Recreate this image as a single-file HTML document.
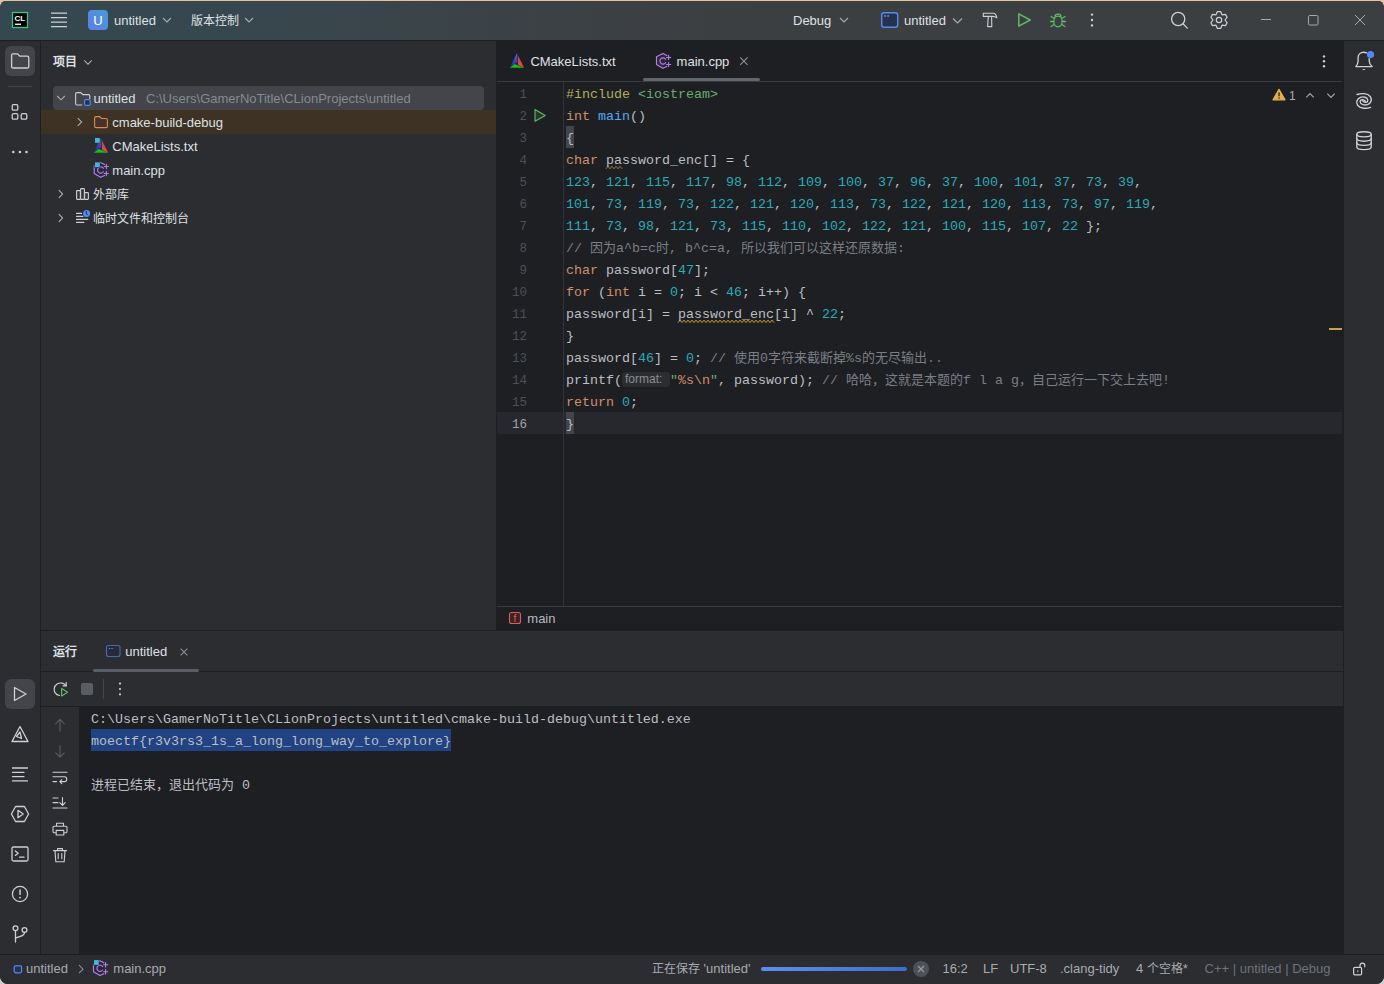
<!DOCTYPE html>
<html lang="zh-CN"><head><meta charset="utf-8">
<style>
*{margin:0;padding:0;box-sizing:border-box}
html,body{width:1384px;height:984px;overflow:hidden}
body{background:linear-gradient(180deg,#e6c29f 0%,#e6c29f 50%,#cfcfcf 50%,#cfcfcf 100%);font-family:"Liberation Sans",sans-serif;font-size:13px;color:#dfe1e5;position:relative}
.a{position:absolute}
.win{position:absolute;left:0;top:0;width:1384px;height:984px;background:#2b2d30;border-radius:8px;overflow:hidden}
.t{position:absolute;white-space:pre;line-height:16px;font-size:13px}
.cj{font-size:12px}
svg{position:absolute;overflow:visible;left:0;top:0}
.code{position:absolute;margin-top:2px;left:566px;white-space:pre;font-family:"Liberation Mono",monospace;font-size:13.33px;line-height:22px;height:22px;color:#bcbec4}
.c13{font-size:13px}
.k{color:#cf8e6d}.n{color:#2aacb8}.f{color:#56a8f5}.s{color:#6aab73}.cm{color:#7a7e85}.pp{color:#b3ae60}
.ln{position:absolute;margin-top:2px;width:40px;text-align:right;left:487px;font-family:"Liberation Mono",monospace;font-size:12.5px;line-height:22px;color:#4b5059}
</style></head><body>
<svg width="0" height="0" style="position:absolute">
<defs>
  <linearGradient id="cmb" x1="0" y1="0" x2="0" y2="1"><stop offset="0" stop-color="#6068d8"/><stop offset="1" stop-color="#1c1aa6"/></linearGradient>
  <linearGradient id="cmr" x1="0" y1="0" x2="0" y2="1"><stop offset="0" stop-color="#c03a34"/><stop offset="1" stop-color="#e85050"/></linearGradient>
</defs></svg>
<div class="win">
<div class="a" style="left:0;top:0;width:1384px;height:40px;background:linear-gradient(90deg,#35474f 0px,#35474f 150px,#39464c 330px,#3c4145 560px,#3c3f42 760px,#3c3f42 1384px)"></div>
<div class="a" style="left:0;top:40px;width:1384px;height:1px;background:#1e1f22"></div>
<svg width="1384" height="41">
  <!-- CL logo -->
  <rect x="12.5" y="12.5" width="15" height="15" fill="#000" stroke="#21d789" stroke-width="1.2"/>
  <text x="14.6" y="21.2" font-family="Liberation Sans" font-weight="bold" font-size="8" fill="#fff">CL</text>
  <rect x="15" y="23.6" width="6" height="1.3" fill="#fff"/>
  <!-- hamburger -->
  <g stroke="#ced0d6" stroke-width="1.3">
    <line x1="51" y1="13.2" x2="67" y2="13.2"/><line x1="51" y1="17.7" x2="67" y2="17.7"/>
    <line x1="51" y1="22.2" x2="67" y2="22.2"/><line x1="51" y1="26.7" x2="67" y2="26.7"/>
  </g>
  <!-- U badge -->
  <defs><linearGradient id="ug" x1="0" y1="1" x2="1" y2="0"><stop offset="0" stop-color="#5b7ee8"/><stop offset="1" stop-color="#4a9ad4"/></linearGradient></defs>
  <rect x="88" y="10" width="20" height="20" rx="4" fill="url(#ug)"/>
  <text x="98" y="24.6" text-anchor="middle" font-family="Liberation Sans" font-size="13" fill="#fff">U</text>
  <g fill="none" stroke="#a9abb0" stroke-width="1.1">
    <path d="M163 18 L167 22 L171 18"/>
    <path d="M245 18 L249 22 L253 18"/>
    <path d="M840 18 L844 22 L848 18"/>
    <path d="M953 18.5 L957.5 23 L962 18.5"/>
  </g>
  <!-- run config icon -->
  <rect x="881.7" y="12.7" width="16" height="14.6" rx="2.5" fill="#25324d" stroke="#548af7" stroke-width="1.4"/>
  <rect x="884.3" y="15.3" width="1.6" height="1.3" fill="#8fb0f0"/><rect x="887.3" y="15.3" width="1.6" height="1.3" fill="#8fb0f0"/>
  <!-- hammer -->
  <g fill="none" stroke="#ced0d6" stroke-width="1.1" stroke-linejoin="round">
    <path d="M983.3 13.2 H993.5 C995 13.5 996.5 15.5 996.8 17.8 C995.5 16.8 993.5 16.3 991.8 16.4 H983.3 Z"/><path d="M988.3 16.6 L987.6 26.6 H991.8 L991.6 16.6"/>
  </g>
  <!-- run -->
  <path d="M1018.8 13.8 L1030.2 20 L1018.8 26.2 Z" fill="none" stroke="#5fb865" stroke-width="1.5" stroke-linejoin="round"/>
  <!-- bug -->
  <g fill="none" stroke="#5fb865" stroke-width="1.3" stroke-linecap="round">
    <ellipse cx="1058" cy="21.5" rx="4.2" ry="5.3"/>
    <path d="M1055 16.5 C1055 13.2 1061 13.2 1061 16.5"/>
    <path d="M1051 16.5 L1053.8 18.3 M1065 16.5 L1062.2 18.3 M1050.5 21.5 H1053.8 M1065.5 21.5 H1062.2 M1051 26.5 L1053.8 24.7 M1065 26.5 L1062.2 24.7"/>
  </g>
  <!-- kebab -->
  <g fill="#ced0d6"><circle cx="1092" cy="14.6" r="1.2"/><circle cx="1092" cy="20" r="1.2"/><circle cx="1092" cy="25.4" r="1.2"/></g>
  <!-- search -->
  <g fill="none" stroke="#ced0d6" stroke-width="1.3" stroke-linecap="round">
    <circle cx="1178.2" cy="19" r="6.6"/><path d="M1183 23.8 L1187.3 28.1"/>
  </g>
  <!-- gear -->
  <g fill="none" stroke="#ced0d6" stroke-width="1.2" stroke-linejoin="round">
    <path d="M1217.36 11.56 L1220.64 11.56 L1222.00 14.80 L1225.49 14.36 L1227.13 17.20 L1225.00 20.00 L1227.13 22.80 L1225.49 25.64 L1222.00 25.20 L1220.64 28.44 L1217.36 28.44 L1216.00 25.20 L1212.51 25.64 L1210.87 22.80 L1213.00 20.00 L1210.87 17.20 L1212.51 14.36 L1216.00 14.80 Z"/>
    <circle cx="1219" cy="20" r="2.7"/>
  </g>
  <!-- window controls -->
  <g fill="none" stroke="#a7a9ad" stroke-width="1">
    <path d="M1261 19.5 H1271"/>
    <rect x="1308.5" y="15.5" width="9.5" height="9.5" rx="1.2"/>
    <path d="M1355 15 L1365 25 M1365 15 L1355 25"/>
  </g>
</svg>
<div class="t" style="left:114px;top:13px">untitled</div>
<div class="t cj" style="left:191px;top:13px">版本控制</div>
<div class="t" style="left:793px;top:13px">Debug</div>
<div class="t" style="left:904px;top:13px">untitled</div>
<div class="a" style="left:40px;top:41px;width:1px;height:913px;background:#1e1f22"></div>
<div class="a" style="left:5px;top:46px;width:30px;height:30px;border-radius:6px;background:#43454a"></div>
<div class="a" style="left:8px;top:86px;width:24px;height:1px;background:#43454a"></div>
<div class="a" style="left:5px;top:679px;width:30px;height:30px;border-radius:6px;background:#43454a"></div>
<svg width="41" height="984">
  <g fill="none" stroke="#ced0d6" stroke-width="1.3" stroke-linejoin="round" stroke-linecap="round">
    <!-- folder -->
    <path d="M11.6 55.5 a1.6 1.6 0 0 1 1.6 -1.6 h4.4 l2.2 2.3 h7.4 a1.6 1.6 0 0 1 1.6 1.6 v8.6 a1.6 1.6 0 0 1 -1.6 1.6 h-14 a1.6 1.6 0 0 1 -1.6 -1.6 z"/>
    <!-- structure -->
    <rect x="12.2" y="104.6" width="5.6" height="5.6" rx="1.3"/>
    <rect x="12.2" y="113.6" width="5.6" height="5.6" rx="1.3"/>
    <rect x="21.2" y="113.6" width="5.6" height="5.6" rx="1.3"/>
    <!-- run -->
    <path d="M14.5 687.5 L26 694 L14.5 700.5 Z"/>
    <!-- cmake -->
    <path d="M20 726.5 L28 741.5 H12 Z"/>
    <path d="M20 732 L21.5 738.5 L16.5 736.5 Z"/>
    <!-- lines -->
    <path d="M12.5 768 H27.5 M12.5 772.3 H24 M12.5 776.6 H24 M12.5 780.9 H27.5"/>
    <!-- services -->
    <path d="M15.6 806.5 H24.4 L28.6 814 L24.4 821.5 H15.6 L11.4 814 Z"/>
    <path d="M18 810.3 L23.2 814 L18 817.7 Z"/>
    <!-- terminal -->
    <rect x="12" y="847" width="16" height="14" rx="1.5"/>
    <path d="M15.3 851 L18.2 853.2 L15.3 855.4 M19.6 857.2 H24"/>
    <!-- problems -->
    <circle cx="20" cy="894" r="7.6"/>
  </g>
  <g fill="#ced0d6"><rect x="19.3" y="889.3" width="1.5" height="5.8" rx=".7"/><circle cx="20" cy="897.6" r=".95"/>
  <circle cx="13.3" cy="152" r="1.3"/><circle cx="19.9" cy="152" r="1.3"/><circle cx="26.5" cy="152" r="1.3"/></g>
  <!-- git -->
  <g fill="none" stroke="#ced0d6" stroke-width="1.3" stroke-linecap="round">
    <circle cx="15.5" cy="928.2" r="2.4"/><circle cx="24.5" cy="930" r="2.4"/>
    <path d="M15.5 930.6 V942 M24.5 932.4 C24.5 936.5 19 936 15.8 938"/>
  </g>
</svg>
<div class="a" style="left:496px;top:41px;width:1px;height:590px;background:#1e1f22"></div>
<div class="t cj" style="left:53px;top:54px;font-weight:bold">项目</div>
<div class="a" style="left:53px;top:86px;width:431px;height:24px;border-radius:4px;background:#43454a"></div>
<div class="a" style="left:41px;top:110px;width:455px;height:24px;background:#3d3223"></div>
<svg width="497" height="240">
  <g fill="none" stroke="#a9abb0" stroke-width="1.1">
    <path d="M84.2 60.3 L88 64.1 L91.8 60.3"/>
    <path d="M57.2 96 L61 99.8 L64.8 96"/>
    <path d="M77.8 118.2 L81.6 122 L77.8 125.8"/>
    <path d="M58.8 190.2 L62.6 194 L58.8 197.8"/>
    <path d="M58.8 214.2 L62.6 218 L58.8 221.8"/>
  </g>
  <!-- untitled folder w/ module badge -->
  <path d="M75.6 94 a1.4 1.4 0 0 1 1.4 -1.4 h3.8 l2 2 h5.6 a1.4 1.4 0 0 1 1.4 1.4 v3" fill="none" stroke="#ced0d6" stroke-width="1.1"/>
  <path d="M75.6 94 v9.6 a1.4 1.4 0 0 0 1.4 1.4 h5.2" fill="none" stroke="#ced0d6" stroke-width="1.1"/>
  <rect x="84.6" y="99.6" width="5.6" height="5.8" rx="1.2" fill="#25324d" stroke="#548af7" stroke-width="1.1"/>
  <!-- orange folder -->
  <path d="M94.6 118 a1.4 1.4 0 0 1 1.4 -1.4 h3.6 l1.9 1.9 h4.5 a1.4 1.4 0 0 1 1.4 1.4 v6.3 a1.4 1.4 0 0 1 -1.4 1.4 h-10 a1.4 1.4 0 0 1 -1.4 -1.4 z" fill="#45322b" stroke="#e08855" stroke-width="1.1"/>
  <!-- cmake icon -->
  <g transform="translate(93.8 138.9) scale(1.0214 0.9929)">
    <polygon points="6.6,0 0,14 4.7,10.2 7.5,8.7 7.2,0.3" fill="url(#cmb)"/>
    <polygon points="7.3,0 14,14 8,11 8,0.5" fill="url(#cmr)"/>
    <polygon points="0,14 4.7,10.2 14,14" fill="#12c412"/>
  </g>
  <rect x="94.4" y="137.4" width="6" height="6" fill="#2b2d30"/>
  <rect x="95" y="138" width="4.8" height="4.8" fill="#40b6e0"/>
  <!-- cpp icon -->
  <g transform="translate(92.7 162.0) scale(1.0000 1.0000)">
    <path d="M7.9 0.4 L1.5 3.7 V11.5 L7.9 15.3 L11.8 13.2 V2.6 Z" fill="#2e2638"/>
    <g fill="none" stroke="#b080ee" stroke-width="1.15" stroke-linecap="round" stroke-linejoin="round">
      <path d="M11.8 2.5 L7.9 0.4 L1.5 3.7 V11.5 L7.9 15.3 L11.8 13.4"/>
      <path d="M10.6 6.3 A3.1 3.1 0 1 0 10.6 9.7"/>
      <path d="M13.6 2.4 V6.6 M11.5 4.5 H15.7 M13.6 9.4 V13.6 M11.5 11.5 H15.7"/>
    </g>
  </g>
  <rect x="94.4" y="161.8" width="6" height="6" fill="#2b2d30"/>
  <rect x="95" y="162.4" width="4.8" height="4.8" fill="#40b6e0"/>
  <!-- library -->
  <g fill="#36373b" stroke="#ced0d6" stroke-width="1.1" stroke-linejoin="round">
    <rect x="76.6" y="190.6" width="3.8" height="8.8" rx=".6"/>
    <rect x="80.6" y="188.6" width="3.8" height="10.8" rx=".6"/>
    <rect x="84.6" y="192.6" width="3.8" height="6.8" rx=".6"/>
  </g>
  <!-- scratches -->
  <g fill="none" stroke="#ced0d6" stroke-width="1.1" stroke-linecap="round">
    <path d="M76.5 213.4 H81.6 M76.5 216.4 H83 M76.5 219.4 H87.8 M76.5 222.4 H83.8"/>
  </g>
  <circle cx="86.6" cy="213.4" r="4.2" fill="#2b2d30"/>
  <circle cx="86.6" cy="213.4" r="3.5" fill="#548af7"/>
  <path d="M86.3 211.2 V213.7 L87.8 215.2" fill="none" stroke="#1e1f22" stroke-width="1"/>
</svg>
<div class="t" style="left:93.5px;top:91px">untitled</div>
<div class="t" style="left:146px;top:91px;color:#868a91">C:\Users\GamerNoTitle\CLionProjects\untitled</div>
<div class="t" style="left:112.3px;top:115px">cmake-build-debug</div>
<div class="t" style="left:112.3px;top:139px">CMakeLists.txt</div>
<div class="t" style="left:112.3px;top:163px">main.cpp</div>
<div class="t cj" style="left:93px;top:187px">外部库</div>
<div class="t cj" style="left:93px;top:211px">临时文件和控制台</div>
<div class="a" style="left:497px;top:41px;width:846px;height:590px;background:#1e1f22"></div>
<div class="a" style="left:497px;top:81px;width:845px;height:1px;background:#393b40"></div>
<div class="a" style="left:643px;top:78px;width:117px;height:3px;border-radius:2px;background:#62666d"></div>
<div class="a" style="left:497px;top:412px;width:845px;height:22px;background:#26282e"></div>
<div class="a" style="left:563px;top:82px;width:1px;height:524px;background:#313438"></div>
<div class="a" style="left:497px;top:606px;width:845px;height:1px;background:#393b40"></div>
<div class="a" style="left:566px;top:126px;width:8px;height:22px;background:#43454a"></div>
<div class="a" style="left:566px;top:412px;width:8px;height:22px;background:#43454a"></div>
<div class="a" style="left:1329px;top:328px;width:13px;height:2px;background:#c9a04e"></div>
<svg width="1384" height="640">
  <!-- cmake tab icon -->
  <g transform="translate(509.9 53.8) scale(1.0071 0.9929)">
    <polygon points="6.6,0 0,14 4.7,10.2 7.5,8.7 7.2,0.3" fill="url(#cmb)"/>
    <polygon points="7.3,0 14,14 8,11 8,0.5" fill="url(#cmr)"/>
    <polygon points="0,14 4.7,10.2 14,14" fill="#12c412"/>
  </g>
  <!-- cpp tab icon -->
  <g transform="translate(655.0 53.0) scale(1.0000 1.0000)">
    <path d="M7.9 0.4 L1.5 3.7 V11.5 L7.9 15.3 L11.8 13.2 V2.6 Z" fill="#2e2638"/>
    <g fill="none" stroke="#b080ee" stroke-width="1.15" stroke-linecap="round" stroke-linejoin="round">
      <path d="M11.8 2.5 L7.9 0.4 L1.5 3.7 V11.5 L7.9 15.3 L11.8 13.4"/>
      <path d="M10.6 6.3 A3.1 3.1 0 1 0 10.6 9.7"/>
      <path d="M13.6 2.4 V6.6 M11.5 4.5 H15.7 M13.6 9.4 V13.6 M11.5 11.5 H15.7"/>
    </g>
  </g>
  <path d="M740.2 57.4 L747.6 64.8 M747.6 57.4 L740.2 64.8" stroke="#8c8f94" stroke-width="1.1"/>
  <g fill="#ced0d6"><circle cx="1324" cy="56.4" r="1.2"/><circle cx="1324" cy="61.3" r="1.2"/><circle cx="1324" cy="66.2" r="1.2"/></g>
  <!-- gutter run -->
  <path d="M535 109.6 L545.2 115.4 L535 121.2 Z" fill="#253a2a" stroke="#5fb865" stroke-width="1.15" stroke-linejoin="round"/>
  <!-- warning -->
  <path d="M1279 89.3 L1285 99.8 H1273 Z" fill="#e0b04e" stroke="#e0b04e" stroke-width="1.2" stroke-linejoin="round"/>
  <rect x="1278.4" y="92.3" width="1.3" height="4" fill="#1e1f22"/><rect x="1278.4" y="97.4" width="1.3" height="1.3" fill="#1e1f22"/>
  <g fill="none" stroke="#a9abb0" stroke-width="1.1">
    <path d="M1306.3 97.4 L1310 93.6 L1313.7 97.4"/>
    <path d="M1327.3 93.6 L1331 97.4 L1334.7 93.6"/>
  </g>
  <!-- wavy underlines -->
  <path d="M606 168.8 L608.0 166.3 L610.0 168.8 L612.0 166.3 L614.0 168.8 L616.0 166.3 L618.0 168.8 L620.0 166.3 L622.0 168.8" fill="none" stroke="#8f7e45" stroke-width="1"/>
  <path d="M678 322.6 L680.0 320.1 L682.0 322.6 L684.0 320.1 L686.0 322.6 L688.0 320.1 L690.0 322.6 L692.0 320.1 L694.0 322.6 L696.0 320.1 L698.0 322.6 L700.0 320.1 L702.0 322.6 L704.0 320.1 L706.0 322.6 L708.0 320.1 L710.0 322.6 L712.0 320.1 L714.0 322.6 L716.0 320.1 L718.0 322.6 L720.0 320.1 L722.0 322.6 L724.0 320.1 L726.0 322.6 L728.0 320.1 L730.0 322.6 L732.0 320.1 L734.0 322.6 L736.0 320.1 L738.0 322.6 L740.0 320.1 L742.0 322.6 L744.0 320.1 L746.0 322.6 L748.0 320.1 L750.0 322.6 L752.0 320.1 L754.0 322.6 L756.0 320.1 L758.0 322.6 L760.0 320.1 L762.0 322.6 L764.0 320.1 L766.0 322.6 L768.0 320.1 L770.0 322.6 L772.0 320.1 L774.0 322.6" fill="none" stroke="#c4a13e" stroke-width="1"/>
  <!-- breadcrumb f icon -->
  <rect x="509.5" y="612.5" width="11" height="11" rx="2" fill="#3b2326" stroke="#db5c5c" stroke-width="1.1"/>
  <text x="515" y="621.6" text-anchor="middle" font-family="Liberation Sans" font-size="10" fill="#db5c5c">f</text>
</svg>
<div class="t" style="left:530.4px;top:54px">CMakeLists.txt</div>
<div class="t" style="left:676.6px;top:54px">main.cpp</div>
<div class="t" style="left:1289px;top:88px;font-size:12px;color:#a8adbd">1</div>
<div class="t" style="left:527.3px;top:611px;color:#b5b8bf">main</div>
<div class="ln" style="top:82px">1</div>
<div class="ln" style="top:104px">2</div>
<div class="ln" style="top:126px">3</div>
<div class="ln" style="top:148px">4</div>
<div class="ln" style="top:170px">5</div>
<div class="ln" style="top:192px">6</div>
<div class="ln" style="top:214px">7</div>
<div class="ln" style="top:236px">8</div>
<div class="ln" style="top:258px">9</div>
<div class="ln" style="top:280px">10</div>
<div class="ln" style="top:302px">11</div>
<div class="ln" style="top:324px">12</div>
<div class="ln" style="top:346px">13</div>
<div class="ln" style="top:368px">14</div>
<div class="ln" style="top:390px">15</div>
<div class="ln" style="top:412px;color:#a1a3ab">16</div>
<div class="code" style="top:82px"><span class="pp">#include</span> <span class="s">&lt;iostream&gt;</span></div>
<div class="code" style="top:104px"><span class="k">int</span> <span class="f">main</span>()</div>
<div class="code" style="top:126px">{</div>
<div class="code" style="top:148px"><span class="k">char</span> password_enc[] = {</div>
<div class="code n" style="top:170px">123<span style="color:#bcbec4">,</span> 121<span style="color:#bcbec4">,</span> 115<span style="color:#bcbec4">,</span> 117<span style="color:#bcbec4">,</span> 98<span style="color:#bcbec4">,</span> 112<span style="color:#bcbec4">,</span> 109<span style="color:#bcbec4">,</span> 100<span style="color:#bcbec4">,</span> 37<span style="color:#bcbec4">,</span> 96<span style="color:#bcbec4">,</span> 37<span style="color:#bcbec4">,</span> 100<span style="color:#bcbec4">,</span> 101<span style="color:#bcbec4">,</span> 37<span style="color:#bcbec4">,</span> 73<span style="color:#bcbec4">,</span> 39<span style="color:#bcbec4">,</span></div>
<div class="code n" style="top:192px">101<span style="color:#bcbec4">,</span> 73<span style="color:#bcbec4">,</span> 119<span style="color:#bcbec4">,</span> 73<span style="color:#bcbec4">,</span> 122<span style="color:#bcbec4">,</span> 121<span style="color:#bcbec4">,</span> 120<span style="color:#bcbec4">,</span> 113<span style="color:#bcbec4">,</span> 73<span style="color:#bcbec4">,</span> 122<span style="color:#bcbec4">,</span> 121<span style="color:#bcbec4">,</span> 120<span style="color:#bcbec4">,</span> 113<span style="color:#bcbec4">,</span> 73<span style="color:#bcbec4">,</span> 97<span style="color:#bcbec4">,</span> 119<span style="color:#bcbec4">,</span></div>
<div class="code n" style="top:214px">111<span style="color:#bcbec4">,</span> 73<span style="color:#bcbec4">,</span> 98<span style="color:#bcbec4">,</span> 121<span style="color:#bcbec4">,</span> 73<span style="color:#bcbec4">,</span> 115<span style="color:#bcbec4">,</span> 110<span style="color:#bcbec4">,</span> 102<span style="color:#bcbec4">,</span> 122<span style="color:#bcbec4">,</span> 121<span style="color:#bcbec4">,</span> 100<span style="color:#bcbec4">,</span> 115<span style="color:#bcbec4">,</span> 107<span style="color:#bcbec4">,</span> 22 <span style="color:#bcbec4">};</span></div>
<div class="code cm" style="top:236px">// <span class="c13">因为</span>a^b=c<span class="c13">时</span>, b^c=a, <span class="c13">所以我们可以这样还原数据</span>:</div>
<div class="code" style="top:258px"><span class="k">char</span> password[<span class="n">47</span>];</div>
<div class="code" style="top:280px"><span class="k">for</span> (<span class="k">int</span> i = <span class="n">0</span>; i &lt; <span class="n">46</span>; i++) {</div>
<div class="code" style="top:302px">password[i] = password_enc[i] ^ <span class="n">22</span>;</div>
<div class="code" style="top:324px">}</div>
<div class="code" style="top:346px">password[<span class="n">46</span>] = <span class="n">0</span>; <span class="cm">// <span class="c13">使用</span>0<span class="c13">字符来截断掉</span>%s<span class="c13">的无尽输出</span>..</span></div>
<div class="code" style="top:368px">printf(</div>
<div class="a" style="left:622px;top:372px;width:48px;height:15px;border-radius:4px;background:#2b2d30"></div>
<div class="t" style="left:625px;top:371px;font-size:12px;color:#8c8f94">format:</div>
<div class="code" style="top:368px;left:670px"><span class="s">"</span><span class="k">%s\n</span><span class="s">"</span>, password); <span class="cm">// <span class="c13">哈哈，这就是本题的</span>f l a g<span class="c13">，自己运行一下交上去吧</span>!</span></div>
<div class="code" style="top:390px"><span class="k">return</span> <span class="n">0</span>;</div>
<div class="code" style="top:412px">}</div>
<div class="a" style="left:1343px;top:41px;width:1px;height:913px;background:#1e1f22"></div>
<svg width="1384" height="160">
  <g fill="none" stroke="#ced0d6" stroke-width="1.35" stroke-linecap="round" stroke-linejoin="round">
    <!-- bell -->
    <path d="M1355.9 66.6 H1372.1 M1355.9 66.6 C1357.5 64.5 1358.1 63 1358.1 61 V57.5 C1358.1 54.3 1360.5 52.2 1363.8 52.2 C1364.9 52.2 1365.9 52.4 1366.6 52.8 M1369.2 58.6 V61 C1369.2 63 1369.8 64.5 1372.1 66.6"/>
    <!-- spiral -->
    <path d="M1357.1 94.5 C1361 93.2 1367.5 93 1370.2 96.5 C1372.5 99.5 1371 103.5 1367.5 104.6 C1364.5 105.5 1360.6 104.8 1360.2 102 C1359.9 100 1362 99.3 1363.5 99.8 C1364.8 100.2 1365.4 101 1365.2 101.6"/>
    <path d="M1370.6 107.4 C1366.8 108.8 1360.5 108.8 1357.8 105.5 C1355.5 102.6 1357 98.5 1360.5 97.3 C1363.5 96.4 1367.4 97.2 1367.8 100 C1368 102 1366 102.7 1364.5 102.2 C1363.2 101.8 1362.6 101 1362.8 100.4"/>
    <!-- database -->
    <ellipse cx="1364" cy="134.3" rx="7.2" ry="2.6"/>
    <path d="M1356.8 134.3 V147 C1356.8 148.5 1360 149.6 1364 149.6 C1368 149.6 1371.2 148.5 1371.2 147 V134.3"/>
    <path d="M1356.8 138.6 C1356.8 140.1 1360 141.2 1364 141.2 C1368 141.2 1371.2 140.1 1371.2 138.6"/>
    <path d="M1356.8 142.8 C1356.8 144.3 1360 145.4 1364 145.4 C1368 145.4 1371.2 144.3 1371.2 142.8"/>
  </g>
  <circle cx="1370.5" cy="54.5" r="3.6" fill="#548af7"/><path d="M1362 68.9 H1365.6 L1363.8 70.3 Z" fill="#ced0d6"/>
</svg>
<div class="a" style="left:41px;top:630px;width:1302px;height:1px;background:#1e1f22"></div>
<div class="a" style="left:41px;top:631px;width:1302px;height:323px;background:#2b2d30"></div>
<div class="a" style="left:41px;top:671px;width:1302px;height:1px;background:#1e1f22"></div>
<div class="a" style="left:93px;top:669px;width:106px;height:3px;border-radius:2px;background:#5a5d63"></div>
<div class="a" style="left:41px;top:706px;width:1302px;height:1px;background:#1e1f22"></div>
<div class="a" style="left:79px;top:707px;width:1264px;height:247px;background:#1e1f22"></div>
<div class="a" style="left:103px;top:679px;width:1px;height:20px;background:#43454a"></div>
<div class="a" style="left:81px;top:683px;width:12px;height:12px;border-radius:2px;background:#5a5d63"></div>
<div class="a" style="left:91px;top:729px;width:360px;height:22px;background:#214283"></div>
<svg width="1384" height="984">
  <rect x="106.5" y="645.5" width="13.5" height="11" rx="2" fill="#252a3a" stroke="#4a6aa8" stroke-width="1.1"/>
  <rect x="109" y="648" width="1.2" height="1" fill="#6f8fd0"/><rect x="111.5" y="648" width="1.2" height="1" fill="#6f8fd0"/>
  <path d="M180.6 648.6 L187.4 655.4 M187.4 648.6 L180.6 655.4" stroke="#8c8f94" stroke-width="1.1"/>
  <!-- rerun -->
  <g fill="none" stroke="#ced0d6" stroke-width="1.2" stroke-linecap="round">
    <path d="M59.5 695.5 C55.5 694.8 53.8 691.5 54.2 688.6 C54.8 684.6 58.6 682.4 62.2 683.2 C63.8 683.6 65 684.4 66 685.6"/>
    <path d="M66.2 682.6 V685.8 H63"/>
  </g>
  <path d="M61.6 688.5 L67.6 692.2 L61.6 695.9 Z" fill="none" stroke="#5fb865" stroke-width="1.2" stroke-linejoin="round"/>
  <g fill="#ced0d6"><circle cx="120" cy="683.6" r="1.1"/><circle cx="120" cy="689" r="1.1"/><circle cx="120" cy="694.3" r="1.1"/></g>
  <!-- console side icons -->
  <g fill="none" stroke="#5a5d63" stroke-width="1.1" stroke-linecap="round" stroke-linejoin="round">
    <path d="M60 719.5 V731 M55.8 723.6 L60 719.4 L64.2 723.6"/>
    <path d="M60 745.5 V757 M55.8 752.8 L60 757 L64.2 752.8"/>
  </g>
  <g fill="none" stroke="#ced0d6" stroke-width="1.1" stroke-linecap="round" stroke-linejoin="round">
    <path d="M53 772.2 H67 M53 776.8 H64.5 C67.5 776.8 67.5 781.6 64.5 781.6 H60 M61.8 779.6 L59.8 781.6 L61.8 783.6 M53 781.6 H56.5"/>
    <path d="M53 798 H58 M53 802.6 H58 M53 808 H67 M62.5 797.5 V805.4 M59.8 802.6 L62.5 805.4 L65.2 802.6"/>
    <path d="M56.5 826.2 V823.2 H63.5 V826.2 M54.2 826.2 H65.8 A1.2 1.2 0 0 1 67 827.4 V831.6 A1.2 1.2 0 0 1 65.8 832.8 H63.8 M56.2 832.8 H54.2 A1.2 1.2 0 0 1 53 831.6 V827.4 A1.2 1.2 0 0 1 54.2 826.2 M56.2 830.4 H63.8 V835 H56.2 Z"/>
    <path d="M53.5 850.6 H66.5 M57.5 850.6 V848.6 H62.5 V850.6 M55 850.6 L55.8 861.8 H64.2 L65 850.6 M58.2 853.6 V858.8 M61.8 853.6 V858.8"/>
  </g>
</svg>
<div class="t cj" style="left:53px;top:644px;font-weight:bold">运行</div>
<div class="t" style="left:125.3px;top:644px">untitled</div>
<div class="code" style="left:91px;top:707px;margin-top:2px">C:\Users\GamerNoTitle\CLionProjects\untitled\cmake-build-debug\untitled.exe</div>
<div class="code" style="left:91px;top:729px;margin-top:2px">moectf{r3v3rs3_1s_a_long_long_way_to_explore}</div>
<div class="code" style="left:91px;top:773px;margin-top:2px"><span class="c13">进程已结束，退出代码为</span> <span class="n" style="color:#bcbec4">0</span></div>
<div class="a" style="left:1344px;top:707px;width:40px;height:247px;background:#2b2d30"></div>
<div class="a" style="left:0;top:954px;width:1384px;height:1px;background:#1e1f22"></div>
<div class="a" style="left:0;top:955px;width:1384px;height:29px;background:#2b2d30"></div>
<svg width="1384" height="984">
  <rect x="14.2" y="965.8" width="7.4" height="7" rx="1.5" fill="#25324d" stroke="#548af7" stroke-width="1.2"/>
  <path d="M79 965.2 L83 969.2 L79 973.2" fill="none" stroke="#8c8f94" stroke-width="1.1"/>
  <g transform="translate(92.0 960.3) scale(1.0000 1.0000)">
    <path d="M7.9 0.4 L1.5 3.7 V11.5 L7.9 15.3 L11.8 13.2 V2.6 Z" fill="#2e2638"/>
    <g fill="none" stroke="#b080ee" stroke-width="1.15" stroke-linecap="round" stroke-linejoin="round">
      <path d="M11.8 2.5 L7.9 0.4 L1.5 3.7 V11.5 L7.9 15.3 L11.8 13.4"/>
      <path d="M10.6 6.3 A3.1 3.1 0 1 0 10.6 9.7"/>
      <path d="M13.6 2.4 V6.6 M11.5 4.5 H15.7 M13.6 9.4 V13.6 M11.5 11.5 H15.7"/>
    </g>
  </g>
  <rect x="93.3" y="959.5" width="6" height="6" fill="#2b2d30"/>
  <rect x="94" y="960.1" width="4.8" height="4.8" fill="#40b6e0"/>
  <defs><linearGradient id="pg" x1="0" x2="1"><stop offset="0" stop-color="#5b8ff0"/><stop offset="1" stop-color="#3f6fcc"/></linearGradient></defs>
  <rect x="761" y="967" width="146" height="4" rx="2" fill="url(#pg)"/>
  <circle cx="921" cy="969" r="8" fill="#4e5157"/>
  <path d="M918 966 L924 972 M924 966 L918 972" stroke="#9a9da2" stroke-width="1.1"/>
  <g fill="none" stroke="#ced0d6" stroke-width="1.2" stroke-linejoin="round">
    <rect x="1353.6" y="967.4" width="8" height="7.4" rx="1.3"/>
    <path d="M1360 967.4 V965.6 A2.4 2.4 0 0 1 1364.8 965.6 V967.2"/>
  </g>
  <rect x="1357" y="970.2" width="1.4" height="2" fill="#8c8f94"/>
</svg>
<div class="t" style="left:26px;top:961px;color:#a8abb0">untitled</div>
<div class="t" style="left:113.3px;top:961px;color:#a8abb0">main.cpp</div>
<div class="t" style="left:652px;top:961px;color:#a8abb0"><span class="cj">正在保存</span> 'untitled'</div>
<div class="t" style="left:942.5px;top:961px;color:#a8abb0">16:2</div>
<div class="t" style="left:983px;top:961px;color:#a8abb0">LF</div>
<div class="t" style="left:1010px;top:961px;color:#a8abb0">UTF-8</div>
<div class="t" style="left:1060px;top:961px;color:#a8abb0">.clang-tidy</div>
<div class="t" style="left:1136px;top:961px;color:#a8abb0">4 <span class="cj">个空格</span>*</div>
<div class="t" style="left:1204.5px;top:961px;color:#6f737a">C++ | untitled | Debug</div>
</div>
<div class="a" style="left:0;top:0;width:1384px;height:1px;background:#e6c29f"></div>
</body></html>
